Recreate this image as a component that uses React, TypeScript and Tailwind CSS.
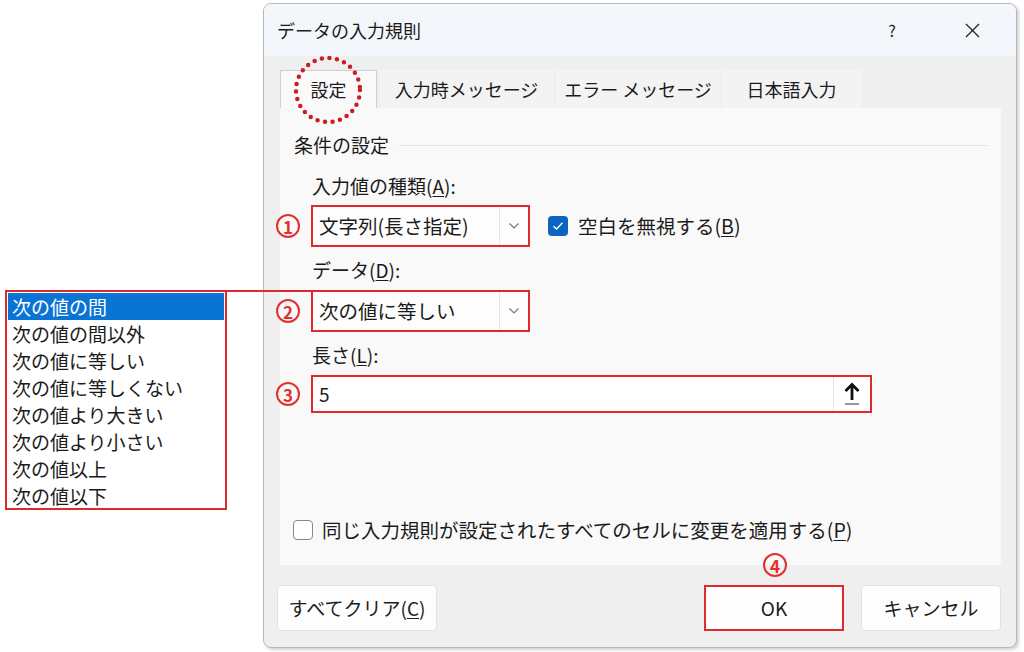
const RED = 'border-[#de2a2f]'

const LIST_ITEMS = [
  '次の値の間',
  '次の値の間以外',
  '次の値に等しい',
  '次の値に等しくない',
  '次の値より大きい',
  '次の値より小さい',
  '次の値以上',
  '次の値以下'
]

function Circled({ n }: { n: string }) {
  return (
    <span className="flex h-[24px] w-[24px] items-center justify-center rounded-full border-[2.5px] border-[#e3302e] text-[17px] font-bold leading-none text-[#e3302e]">
      {n}
    </span>
  )
}

function Num({ n }: { n: string }) {
  return (
    <span className="flex w-[35px] shrink-0">
      <Circled n={n} />
    </span>
  )
}

function Chevron() {
  return (
    <svg width="12" height="8" viewBox="0 0 12 8" fill="none">
      <path d="M1.5 1.5L6 6L10.5 1.5" stroke="#7a7a7a" strokeWidth="1.2" />
    </svg>
  )
}

function Select({ value }: { value: string }) {
  return (
    <div className={`flex h-[42px] w-[219px] border-2 ${RED} bg-[#fdfdfd]`}>
      <div className="flex w-[186px] items-center pl-[6px] text-[19.5px]">{value}</div>
      <div className="flex flex-1 items-center justify-center border-l border-[#e6e6e6]">
        <Chevron />
      </div>
    </div>
  )
}

function Label({ text, k }: { text: string; k: string }) {
  return (
    <div className="pl-[32px] text-[19px] leading-[24px]">
      {text}(<span className="underline underline-offset-2">{k}</span>):
    </div>
  )
}

export default function App() {
  return (
    <div className="relative flex h-[652px] w-[1024px] overflow-hidden bg-white font-['Noto_Sans_CJK_JP','Noto_Sans',sans-serif] text-[#1b1b1b]">
      {/* popup list of データ */}
      <div className="w-[263px] shrink-0 pl-[5px] pt-[290px]">
        <div className={`h-[220px] w-[222px] border-2 ${RED} bg-white p-px`}>
          {LIST_ITEMS.map((item, i) => (
            <div
              key={item}
              className={`h-[27px] pl-[4px] text-[19px] leading-[27px] ${i === 0 ? 'bg-[#0a74d4] text-white' : ''}`}
            >
              {item}
            </div>
          ))}
        </div>
      </div>

      {/* dialog */}
      <div className="mt-[3px] flex h-[645px] w-[754px] shrink-0 flex-col overflow-hidden rounded-[8px] border border-[#b8b8b8] bg-[#efefef] shadow-[2px_2px_3px_rgba(0,0,0,0.18)]">
        <div className="flex h-[52px] items-center bg-[#f3f6fb] pl-[13px] pr-[24px]">
          <span className="text-[18px]">データの入力規則</span>
          <span className="ml-auto w-[40px] text-center text-[16px]">?</span>
          <span className="ml-[40px] flex w-[40px] justify-center">
            <svg width="15" height="15" viewBox="0 0 15 15">
              <path d="M1 1L14 14M14 1L1 14" stroke="#222" strokeWidth="1.3" />
            </svg>
          </span>
        </div>

        <div className="flex flex-1 flex-col px-[16px]">
          <div className="mt-[14px] flex h-[38px] text-[18px]">
            <div className="flex w-[97px] items-center justify-center border border-b-0 border-[#cfcfcf] bg-[#fafafa]">設定</div>
            <div className="ml-[3px] flex w-[173px] items-center justify-center bg-[#f3f3f3]">入力時メッセージ</div>
            <div className="ml-[3px] flex w-[164px] items-center justify-center bg-[#f3f3f3]">エラー メッセージ</div>
            <div className="ml-[2px] flex w-[139px] items-center justify-center bg-[#f3f3f3]">日本語入力</div>
          </div>

          <div className="relative flex h-[457px] w-[721px] flex-col bg-[#f9f9f9]">
            <div className="mt-[25px] flex items-center pl-[14px] pr-[14px]">
              <span className="text-[19px] leading-[24px]">条件の設定</span>
              <span className="ml-[10px] h-px flex-1 bg-[#e2e2e2]" />
            </div>

            <div className="mt-[17px]">
              <Label text="入力値の種類" k="A" />
            </div>
            <div className="ml-[-4px] mt-[7px] flex items-center">
              <Num n="1" />
              <Select value="文字列(長さ指定)" />
              <span className="ml-[18px] flex h-[20px] w-[20px] items-center justify-center rounded-[4px] bg-[#0d63bf]">
                <svg width="12" height="10" viewBox="0 0 12 10" fill="none">
                  <path d="M1.5 5.2L4.5 8L10.5 1.8" stroke="white" strokeWidth="1.4" />
                </svg>
              </span>
              <span className="ml-[10px] text-[19.5px]">
                空白を無視する(<span className="underline underline-offset-2">B</span>)
              </span>
            </div>

            <div className="mt-[11px]">
              <Label text="データ" k="D" />
            </div>
            <div className="ml-[-4px] mt-[8px] flex items-center">
              <Num n="2" />
              <Select value="次の値に等しい" />
            </div>

            <div className="mt-[11px]">
              <Label text="長さ" k="L" />
            </div>
            <div className="ml-[-4px] mt-[8px] flex items-center">
              <Num n="3" />
              <div className={`flex h-[38px] w-[561px] border-2 ${RED} bg-white`}>
                <div className="flex w-[520px] items-center pl-[6px] text-[19px]">5</div>
                <div className="flex flex-1 items-center justify-center border-l border-[#e3e3e3]">
                  <svg width="18" height="24" viewBox="0 0 18 24" fill="none">
                    <path d="M9 2.5V18" stroke="#111" strokeWidth="2.8" />
                    <path d="M2.5 9L9 2.5L15.5 9" stroke="#111" strokeWidth="2.8" />
                    <path d="M2 22H16" stroke="#333" strokeWidth="1" />
                  </svg>
                </div>
              </div>
            </div>

            <div className="mb-[23px] mt-auto flex items-center pl-[13px]">
              <span className="h-[20px] w-[20px] rounded-[4px] border border-[#8a8a8a] bg-white" />
              <span className="ml-[9px] text-[19.5px] leading-[24px]">
                同じ入力規則が設定されたすべてのセルに変更を適用する(<span className="underline underline-offset-2">P</span>)
              </span>
            </div>

            <span className="absolute left-[483px] top-[445px]">
              <Circled n="4" />
            </span>
          </div>

          <div className="mt-[20px] flex text-[19px]">
            <div className="ml-[-3px] flex h-[46px] w-[160px] items-center justify-center rounded-[4px] border border-[#e3e3e3] bg-[#fdfdfd]">
              すべてクリア(<span className="underline underline-offset-2">C</span>)
            </div>
            <div className={`ml-auto flex h-[46px] w-[140px] items-center justify-center border-2 ${RED} bg-[#fdfdfd]`}>OK</div>
            <div className="ml-[17px] mr-[-1px] flex h-[46px] w-[140px] items-center justify-center rounded-[4px] border border-[#e3e3e3] bg-[#fdfdfd]">
              キャンセル
            </div>
          </div>
        </div>
      </div>

      {/* annotations */}
      <div className="absolute left-[227px] top-[290px] h-[2px] w-[85px] bg-[#de2a2f]" />
      <svg className="absolute left-[293px] top-[55px]" width="70" height="70" viewBox="0 0 70 70">
        <circle cx="35" cy="35" r="32" fill="none" stroke="#cf1b24" strokeWidth="4.5" strokeDasharray="0 7.6" strokeLinecap="round" />
      </svg>
    </div>
  )
}
